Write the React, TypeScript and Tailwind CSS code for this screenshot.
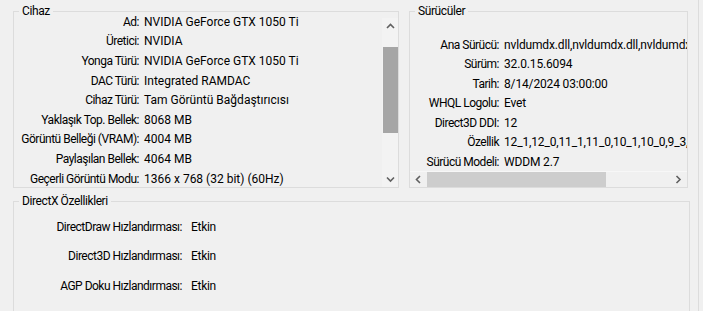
const cihaz: [string, string][] = [
  ["Ad:", "NVIDIA GeForce GTX 1050 Ti"],
  ["Üretici:", "NVIDIA"],
  ["Yonga Türü:", "NVIDIA GeForce GTX 1050 Ti"],
  ["DAC Türü:", "Integrated RAMDAC"],
  ["Cihaz Türü:", "Tam Görüntü Bağdaştırıcısı"],
  ["Yaklaşık Top. Bellek:", "8068 MB"],
  ["Görüntü Belleği (VRAM):", "4004 MB"],
  ["Paylaşılan Bellek:", "4064 MB"],
  ["Geçerli Görüntü Modu:", "1366 x 768 (32 bit) (60Hz)"],
];

const suruculer: [string, string][] = [
  ["Ana Sürücü:", "nvldumdx.dll,nvldumdx.dll,nvldumdx.dll,nvldumdx.dll"],
  ["Sürüm:", "32.0.15.6094"],
  ["Tarih:", "8/14/2024 03:00:00"],
  ["WHQL Logolu:", "Evet"],
  ["Direct3D DDI:", "12"],
  ["Özellik", "12_1,12_0,11_1,11_0,10_1,10_0,9_3,9_2,9_1"],
  ["Sürücü Modeli:", "WDDM 2.7"],
];

const directx: [string, string][] = [
  ["DirectDraw Hızlandırması:", "Etkin"],
  ["Direct3D Hızlandırması:", "Etkin"],
  ["AGP Doku Hızlandırması:", "Etkin"],
];

const Chevron = ({ dir }: { dir: "up" | "down" | "left" | "right" }) => {
  const pts = {
    up: "1,5 4.5,1.5 8,5",
    down: "1,1.5 4.5,5 8,1.5",
    left: "5,1 1.5,4.5 5,8",
    right: "1.5,1 5,4.5 1.5,8",
  }[dir];
  const vert = dir === "up" || dir === "down";
  return (
    <svg width={vert ? 9 : 7} height={vert ? 7 : 9} viewBox={vert ? "0 0 9 7" : "0 0 7 9"}>
      <polyline points={pts} fill="none" stroke="#606060" strokeWidth="1.6" />
    </svg>
  );
};

const Group = ({ title, className, children }: { title: string; className: string; children: React.ReactNode }) => (
  <div className={`relative border border-[#dcdcdc] ${className}`}>
    <span className="absolute left-[5px] top-[-8px] bg-[#f0f0f0] px-[3px] leading-[14px] tracking-[-0.4px]">
      {title}
    </span>
    {children}
  </div>
);

export default function App() {
  return (
    <div
      className="relative h-[311px] w-[703px] overflow-hidden bg-[#f0f0f0] text-[12px] text-black"
      style={{ fontFamily: "Roboto, 'Noto Sans', sans-serif" }}
    >
      <div className="absolute left-[698px] top-0 h-full w-px bg-[#dcdcdc]" />
      <div className="flex gap-[10px] pl-[13px] pt-[11px]">
        <Group title="Cihaz" className="flex h-[177px] w-[386px]">
          <div className="flex-1 overflow-hidden">
            {cihaz.map(([k, v]) => (
              <div key={k} className="flex h-[19.6px] items-center whitespace-nowrap">
                <span className="w-[125px] shrink-0 text-right tracking-[-0.5px]">{k}</span>
                <span className="ml-[5px]">{v}</span>
              </div>
            ))}
          </div>
          <div className="mt-[6px] flex w-[16px] flex-col items-center bg-[#f3f3f3]">
            <div className="flex h-[17px] items-center">
              <Chevron dir="up" />
            </div>
            <div className="mt-[12px] h-[86px] w-[15px] bg-[#a6a6a6]" />
            <div className="flex-1" />
            <div className="flex h-[16px] items-center">
              <Chevron dir="down" />
            </div>
          </div>
        </Group>
        <Group title="Sürücüler" className="flex h-[177px] w-[279px] flex-col">
          <div className="flex-1 overflow-hidden pt-[23px]">
            {suruculer.map(([k, v]) => (
              <div key={k} className="flex h-[19.5px] items-center whitespace-nowrap">
                <span className="w-[89px] shrink-0 text-right tracking-[-0.5px]">{k}</span>
                <span className="ml-[5px] tracking-[-0.15px]">{v}</span>
              </div>
            ))}
          </div>
          <div className="flex h-[16px] items-center border-t border-[#f7f7f7]">
            <div className="flex w-[17px] justify-center">
              <Chevron dir="left" />
            </div>
            <div className="h-full w-[179px] bg-[#cdcdcd]" />
            <div className="flex-1" />
            <div className="flex w-[17px] justify-center">
              <Chevron dir="right" />
            </div>
          </div>
        </Group>
      </div>
      <div className="pl-[13px] pt-[13px]">
        <Group title="DirectX Özellikleri" className="h-[120px] w-[677px] pt-[10px]">
          {directx.map(([k, v]) => (
            <div key={k} className="flex h-[29.5px] items-center whitespace-nowrap">
              <span className="w-[168px] shrink-0 text-right tracking-[-0.5px]">{k}</span>
              <span className="ml-[9px] tracking-[-0.3px]">{v}</span>
            </div>
          ))}
        </Group>
      </div>
    </div>
  );
}
